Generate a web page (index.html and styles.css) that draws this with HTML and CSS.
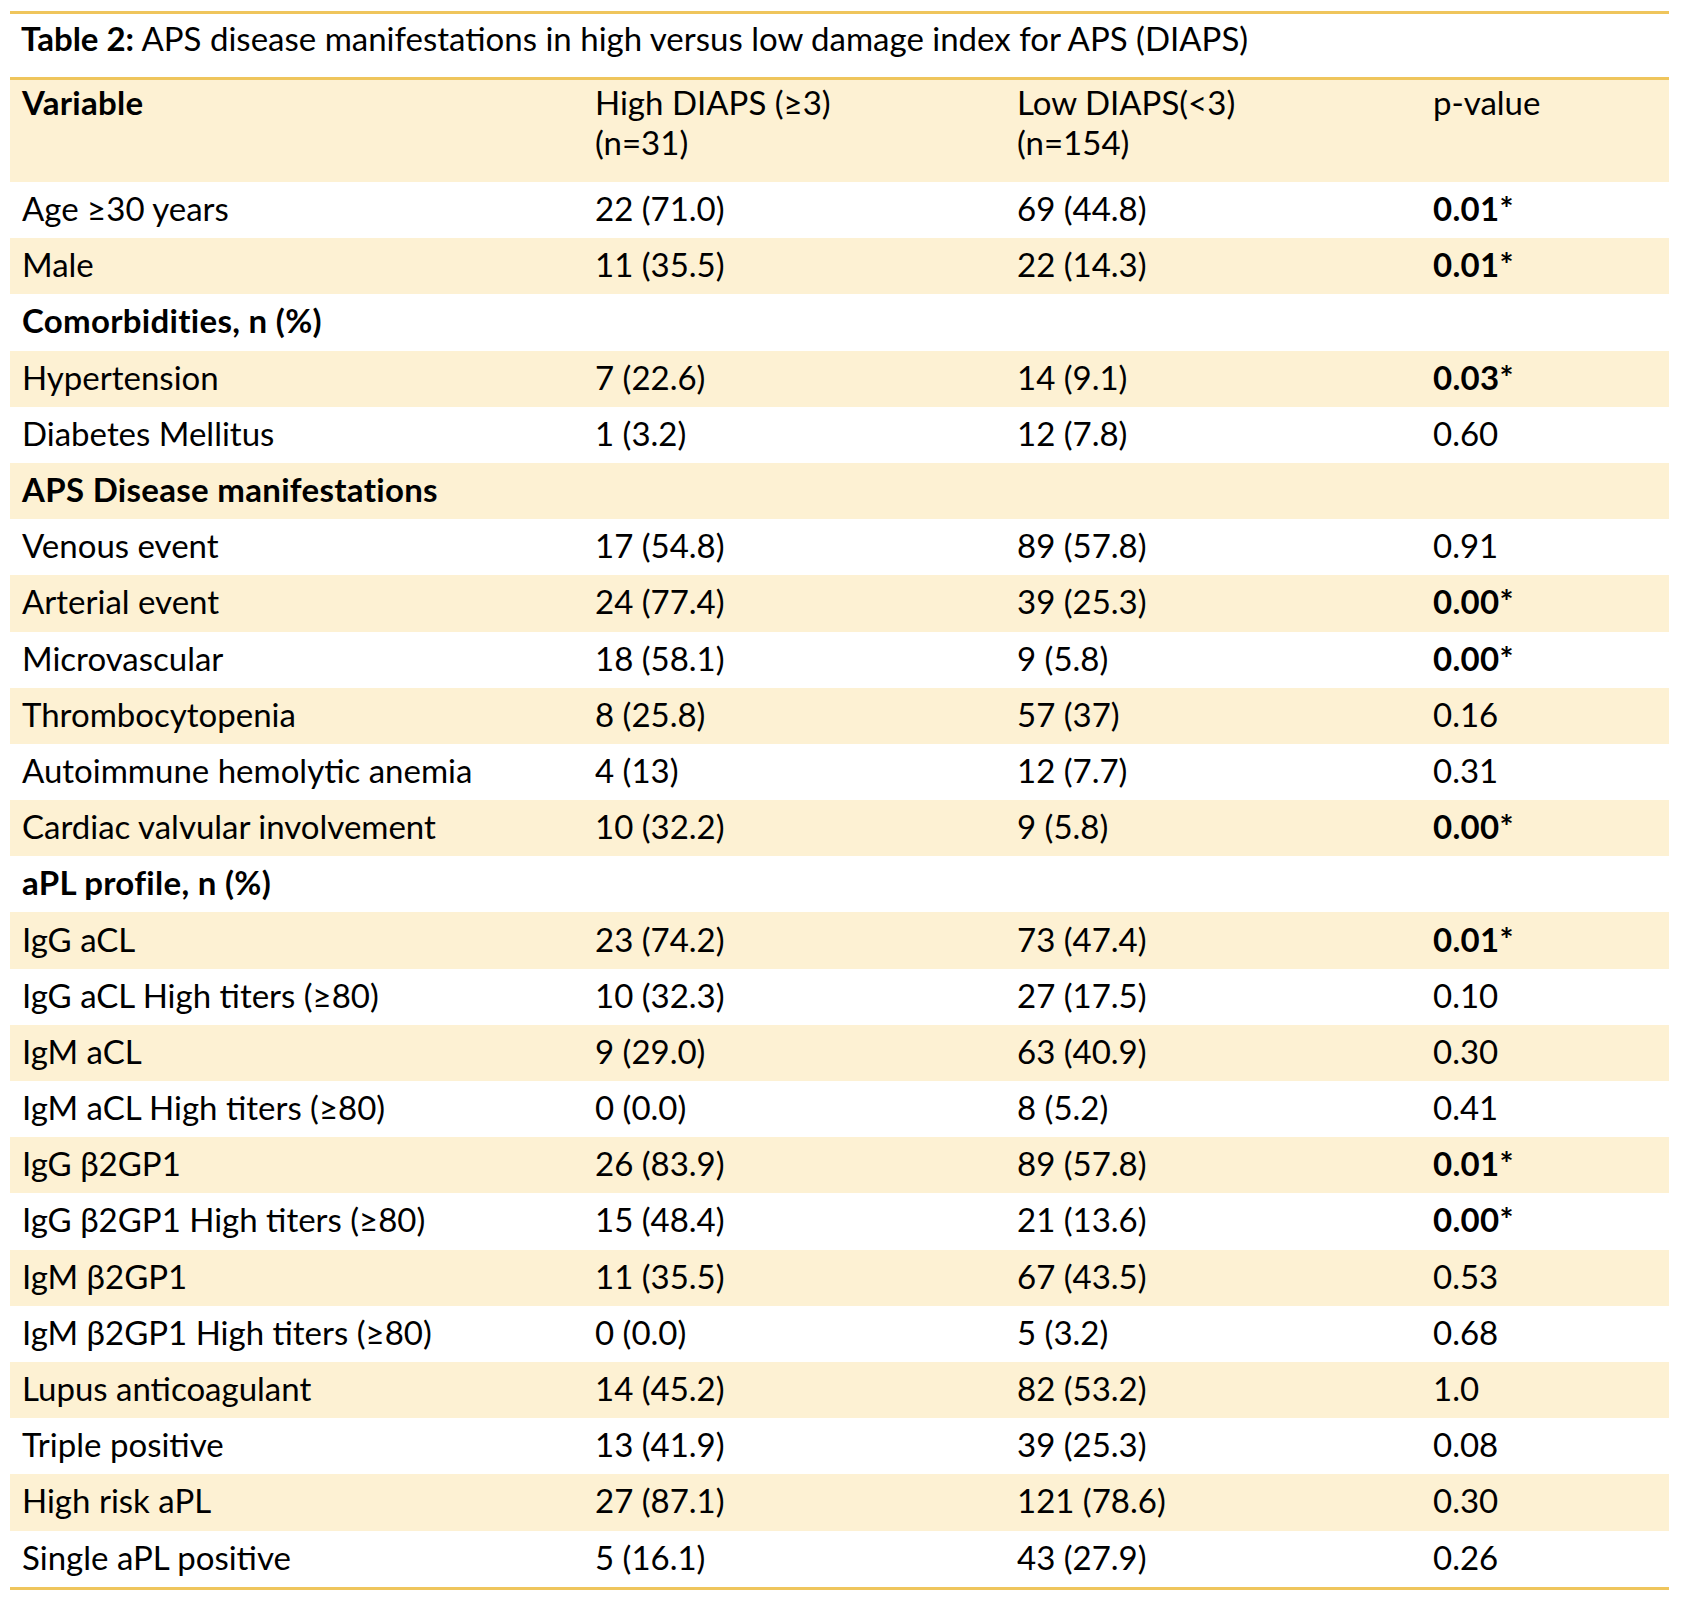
FILE: index.html
```html
<!DOCTYPE html>
<html>
<head>
<meta charset="utf-8">
<link rel="stylesheet" href="styles.css">
</head>
<body>
<div class="wrap">
  <div class="caption"><b>Table 2:</b> APS disease manifestations in high versus low damage index for APS (DIAPS)</div>
  <div class="table">
    <div class="row head">
      <div class="c"><b>Variable</b></div>
      <div class="c">High DIAPS (≥3)<br>(n=31)</div>
      <div class="c">Low DIAPS(&lt;3)<br>(n=154)</div>
      <div class="c">p-value</div>
    </div>
    <div class="body">
      <div class="row"><div class="c">Age ≥30 years</div><div class="c">22 (71.0)</div><div class="c">69 (44.8)</div><div class="c"><b>0.01*</b></div></div>
      <div class="row"><div class="c">Male</div><div class="c">11 (35.5)</div><div class="c">22 (14.3)</div><div class="c"><b>0.01*</b></div></div>
      <div class="row"><div class="c"><b>Comorbidities, n (%)</b></div><div class="c"></div><div class="c"></div><div class="c"></div></div>
      <div class="row"><div class="c">Hypertension</div><div class="c">7 (22.6)</div><div class="c">14 (9.1)</div><div class="c"><b>0.03*</b></div></div>
      <div class="row"><div class="c">Diabetes Mellitus</div><div class="c">1 (3.2)</div><div class="c">12 (7.8)</div><div class="c">0.60</div></div>
      <div class="row"><div class="c"><b>APS Disease manifestations</b></div><div class="c"></div><div class="c"></div><div class="c"></div></div>
      <div class="row"><div class="c">Venous event</div><div class="c">17 (54.8)</div><div class="c">89 (57.8)</div><div class="c">0.91</div></div>
      <div class="row"><div class="c">Arterial event</div><div class="c">24 (77.4)</div><div class="c">39 (25.3)</div><div class="c"><b>0.00*</b></div></div>
      <div class="row"><div class="c">Microvascular</div><div class="c">18 (58.1)</div><div class="c">9 (5.8)</div><div class="c"><b>0.00*</b></div></div>
      <div class="row"><div class="c">Thrombocytopenia</div><div class="c">8 (25.8)</div><div class="c">57 (37)</div><div class="c">0.16</div></div>
      <div class="row"><div class="c">Autoimmune hemolytic anemia</div><div class="c">4 (13)</div><div class="c">12 (7.7)</div><div class="c">0.31</div></div>
      <div class="row"><div class="c">Cardiac valvular involvement</div><div class="c">10 (32.2)</div><div class="c">9 (5.8)</div><div class="c"><b>0.00*</b></div></div>
      <div class="row"><div class="c"><b>aPL profile, n (%)</b></div><div class="c"></div><div class="c"></div><div class="c"></div></div>
      <div class="row"><div class="c">IgG aCL</div><div class="c">23 (74.2)</div><div class="c">73 (47.4)</div><div class="c"><b>0.01*</b></div></div>
      <div class="row"><div class="c">IgG aCL High titers (≥80)</div><div class="c">10 (32.3)</div><div class="c">27 (17.5)</div><div class="c">0.10</div></div>
      <div class="row"><div class="c">IgM aCL</div><div class="c">9 (29.0)</div><div class="c">63 (40.9)</div><div class="c">0.30</div></div>
      <div class="row"><div class="c">IgM aCL High titers (≥80)</div><div class="c">0 (0.0)</div><div class="c">8 (5.2)</div><div class="c">0.41</div></div>
      <div class="row"><div class="c">IgG β2GP1</div><div class="c">26 (83.9)</div><div class="c">89 (57.8)</div><div class="c"><b>0.01*</b></div></div>
      <div class="row"><div class="c">IgG β2GP1 High titers (≥80)</div><div class="c">15 (48.4)</div><div class="c">21 (13.6)</div><div class="c"><b>0.00*</b></div></div>
      <div class="row"><div class="c">IgM β2GP1</div><div class="c">11 (35.5)</div><div class="c">67 (43.5)</div><div class="c">0.53</div></div>
      <div class="row"><div class="c">IgM β2GP1 High titers (≥80)</div><div class="c">0 (0.0)</div><div class="c">5 (3.2)</div><div class="c">0.68</div></div>
      <div class="row"><div class="c">Lupus anticoagulant</div><div class="c">14 (45.2)</div><div class="c">82 (53.2)</div><div class="c">1.0</div></div>
      <div class="row"><div class="c">Triple positive</div><div class="c">13 (41.9)</div><div class="c">39 (25.3)</div><div class="c">0.08</div></div>
      <div class="row"><div class="c">High risk aPL</div><div class="c">27 (87.1)</div><div class="c">121 (78.6)</div><div class="c">0.30</div></div>
      <div class="row"><div class="c">Single aPL positive</div><div class="c">5 (16.1)</div><div class="c">43 (27.9)</div><div class="c">0.26</div></div>
    </div>
  </div>
</div>
</body>
</html>
```

FILE: styles.css
```css
html, body {
  margin: 0;
  padding: 0;
  background: #ffffff;
}
body {
  font-family: Lato, "Open Sans", sans-serif;
  color: #000;
  font-size: 33px;
}
.wrap {
  margin-left: 10px;
  width: 1659px;
  padding-top: 11px;
}
.caption {
  border-top: 3px solid #EFC55C;
  height: 66px;
  box-sizing: border-box;
  padding-left: 11px;
  padding-top: 4px;
  line-height: 40px;
}
.table {
  border-top: 3px solid #EFC55C;
  border-bottom: 3px solid #EFC55C;
}
.row {
  display: grid;
  grid-template-columns: 573px 422px 416px 248px;
  height: 56.2px;
  align-items: center;
}
.row.head {
  height: 102px;
  align-items: start;
  background: #FDF1D3;
  line-height: 40px;
  padding-top: 2px;
  box-sizing: border-box;
}
.c {
  padding-left: 12px;
  white-space: nowrap;
}
.body .c {
  padding-bottom: 4px;
}
.body .row:nth-child(even) {
  background: #FDF1D3;
}
b {
  font-weight: 700;
  letter-spacing: 0.3px;
}
.caption b {
  letter-spacing: 0;
}
```
